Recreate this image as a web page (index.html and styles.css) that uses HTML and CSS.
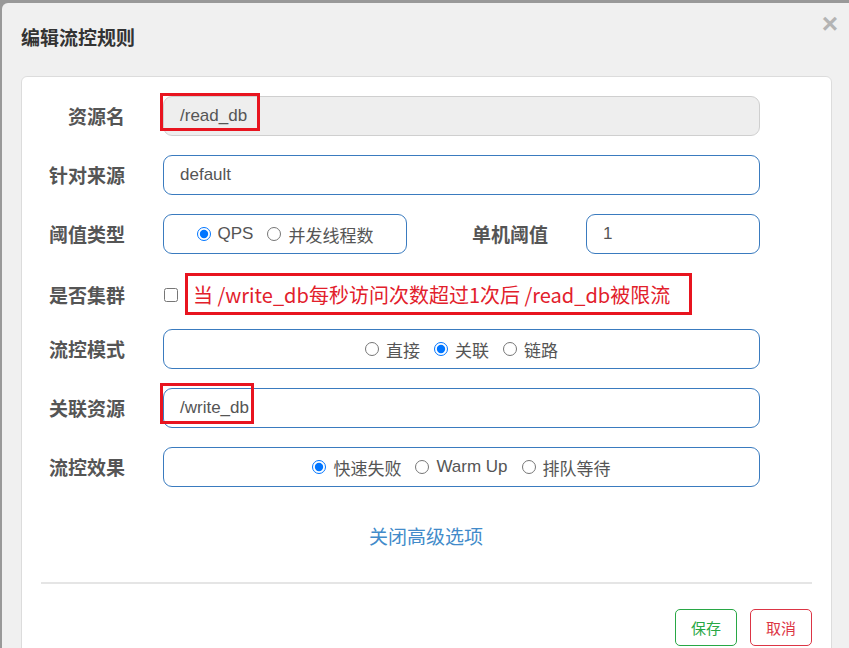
FILE: index.html
```html
<!DOCTYPE html>
<html lang="zh">
<head>
<meta charset="utf-8">
<link rel="stylesheet" href="styles.css">
</head>
<body>
<div class="modal">
  <div class="modal-header">
    <h4 class="title">编辑流控规则</h4>
    <span class="close">×</span>
  </div>
  <div class="card">
    <div class="row">
      <label class="lbl">资源名</label>
      <div class="input disabled">/read_db</div>
      <span class="mark mark-res"></span>
    </div>
    <div class="row">
      <label class="lbl">针对来源</label>
      <div class="input">default</div>
    </div>
    <div class="row">
      <label class="lbl">阈值类型</label>
      <div class="group group-short">
        <label class="opt"><input type="radio" name="t" checked>QPS</label>
        <label class="opt"><input type="radio" name="t">并发线程数</label>
      </div>
      <label class="lbl lbl-mid">单机阈值</label>
      <div class="input input-short">1</div>
    </div>
    <div class="row row-check">
      <label class="lbl">是否集群</label>
      <input type="checkbox" class="check">
      <div class="note">当 /write_db每秒访问次数超过1次后 /read_db被限流</div>
    </div>
    <div class="row">
      <label class="lbl">流控模式</label>
      <div class="group">
        <label class="opt"><input type="radio" name="m">直接</label>
        <label class="opt"><input type="radio" name="m" checked>关联</label>
        <label class="opt"><input type="radio" name="m">链路</label>
      </div>
    </div>
    <div class="row">
      <label class="lbl">关联资源</label>
      <div class="input">/write_db</div>
      <span class="mark mark-rel"></span>
    </div>
    <div class="row">
      <label class="lbl">流控效果</label>
      <div class="group">
        <label class="opt"><input type="radio" name="e" checked>快速失败</label>
        <label class="opt"><input type="radio" name="e">Warm Up</label>
        <label class="opt"><input type="radio" name="e">排队等待</label>
      </div>
    </div>
    <div class="adv"><a class="adv-link">关闭高级选项</a></div>
    <div class="divider"></div>
    <div class="footer">
      <button class="btn btn-save">保存</button>
      <button class="btn btn-cancel">取消</button>
    </div>
  </div>
</div>
</body>
</html>
```
FILE: styles.css
```css
html, body {
  margin: 0;
  padding: 0;
  height: 100%;
  overflow: hidden;
}
body {
  background: #999999;
  font-family: "Liberation Sans", "Noto Sans CJK SC", sans-serif;
  color: #555;
}
.modal {
  margin: 3px 0 0 2px;
  height: calc(100vh - 3px);
  background: #f0f0f0;
  border-radius: 6px 0 0 0;
  overflow: hidden;
}
.modal-header {
  position: relative;
  height: 73px;
  padding: 22px 0 0 19px;
  box-sizing: border-box;
}
.title {
  margin: 0;
  font-family: "Noto Sans CJK SC", sans-serif;
  font-size: 19px;
  line-height: 24px;
  font-weight: bold;
  color: #333;
}
.close {
  position: absolute;
  right: 11px;
  top: 5px;
  font-family: "Liberation Sans", sans-serif;
  font-size: 28px;
  font-weight: bold;
  color: #b4b4b4;
  line-height: 32px;
}
.card {
  margin-left: 19px;
  width: 811px;
  box-sizing: border-box;
  height: 600px;
  background: #fff;
  border: 1px solid #dcdcdc;
  border-radius: 6px;
  padding: 19px 19px 0 20px;
}
.row {
  position: relative;
  display: flex;
  align-items: center;
  height: 40px;
  margin-bottom: 19px;
}
.row-check {
  height: 37px;
  padding-top: 7px;
  box-sizing: border-box;
}
.lbl {
  width: 83px;
  flex: none;
  text-align: right;
  margin-right: 38px;
  font-family: "Noto Sans CJK SC", sans-serif;
  font-size: 19px;
  line-height: 24px;
  margin-top: -1px;
  font-weight: bold;
  color: #555;
  white-space: nowrap;
}
.lbl-mid {
  width: 141px;
}
.input {
  width: 597px;
  height: 40px;
  box-sizing: border-box;
  border: 1px solid #3a7bbf;
  border-radius: 9px;
  padding-left: 16px;
  display: flex;
  align-items: center;
  font-size: 17px;
  color: #555;
  font-family: "Liberation Sans", "Noto Sans CJK SC", sans-serif;
}
.input.disabled {
  background: #eeeeee;
  border-color: #cfcfcf;
}
.input-short {
  width: 174px;
}
.group {
  width: 597px;
  height: 40px;
  box-sizing: border-box;
  border: 1px solid #3a7bbf;
  border-radius: 9px;
  display: flex;
  align-items: center;
  justify-content: center;
  gap: 14px;
  font-family: "Liberation Sans", "Noto Sans CJK SC", sans-serif;
  font-size: 17px;
  color: #555;
}
.group-short {
  width: 244px;
  flex: none;
}
.opt {
  display: flex;
  align-items: center;
  white-space: nowrap;
}
.opt input {
  margin: 0 7px 0 0;
  width: 14px;
  height: 14px;
}
.check {
  margin: 0 0 0 1px;
  width: 14px;
  height: 14px;
}
.note {
  position: absolute;
  left: 143px;
  top: 0;
  width: 507px;
  height: 42px;
  box-sizing: border-box;
  border: 3px solid #e8141f;
  padding-left: 5px;
  display: flex;
  align-items: center;
  color: #e2202b;
  font-family: "Noto Sans CJK SC", sans-serif;
  font-size: 20px;
  white-space: nowrap;
}
.mark {
  position: absolute;
  border: 3px solid #e8141f;
  box-sizing: border-box;
}
.mark-res {
  left: 118px;
  top: -3px;
  width: 100px;
  height: 38px;
}
.mark-rel {
  left: 118px;
  top: -5px;
  width: 94px;
  height: 41px;
}
.adv {
  padding-top: 18px;
  height: 24px;
  text-align: center;
  margin-right: 2px;
}
.adv-link {
  font-family: "Noto Sans CJK SC", sans-serif;
  font-size: 19px;
  line-height: 24px;
  color: #428bca;
}
.divider {
  margin: 34px 0 0 -1px;
  height: 2px;
  width: 771px;
  background: #e5e5e5;
}
.footer {
  margin-top: 25px;
  display: flex;
  justify-content: flex-end;
  gap: 13px;
}
.btn {
  width: 62px;
  height: 37px;
  background: #fff;
  border: 1px solid;
  border-radius: 5px;
  font-family: "Noto Sans CJK SC", sans-serif;
  font-size: 15px;
  padding: 0;
}
.btn-save {
  border-color: #28a745;
  color: #28a745;
}
.btn-cancel {
  border-color: #dc3545;
  color: #dc3545;
}
```
